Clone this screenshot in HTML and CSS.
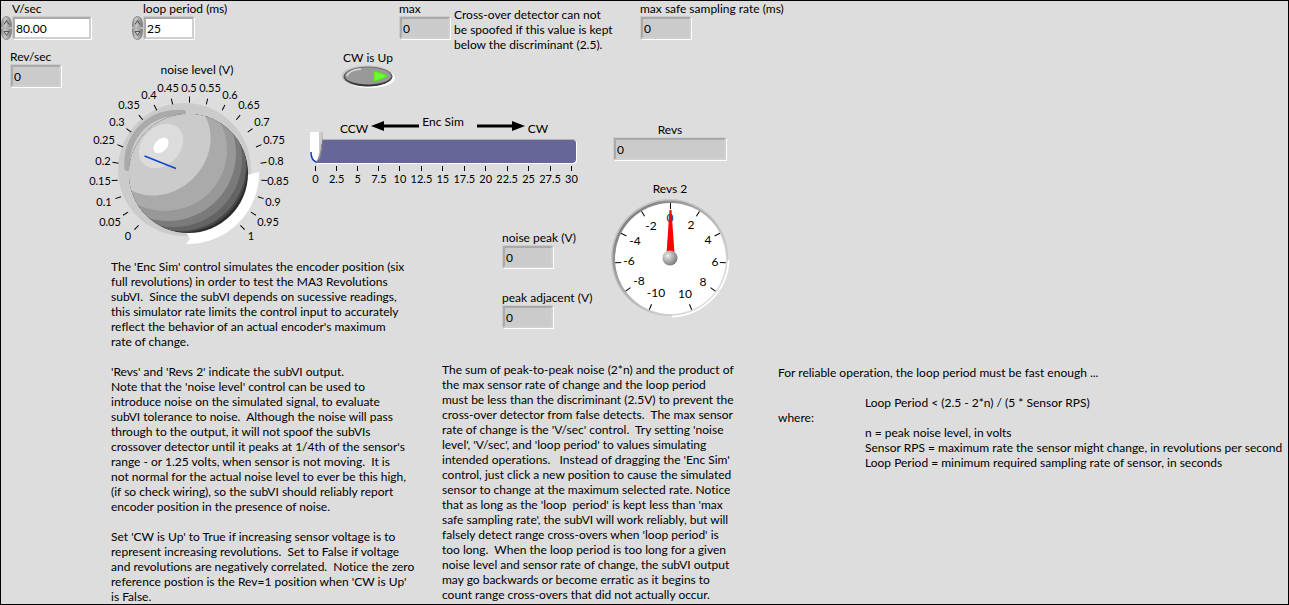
FILE: index.html
```html
<!DOCTYPE html>
<html lang="en">
<head>
<meta charset="utf-8">
<title>Encoder simulator</title>
<link rel="stylesheet" href="styles.css">
</head>
<body>
<main class="panel">
  <header class="topbar">
    <div class="control">
      <label class="caption indent" for="vsec">V/sec</label>
      <div class="numeric">
        <svg class="spinner" viewBox="0 0 11 24" aria-hidden="true"><use href="#spin"/></svg>
        <input class="field wide" id="vsec" type="text" value="80.00">
      </div>
    </div>
    <div class="control">
      <label class="caption indent" for="period">loop period (ms)</label>
      <div class="numeric">
        <svg class="spinner" viewBox="0 0 11 24" aria-hidden="true"><use href="#spin"/></svg>
        <input class="field" id="period" type="text" value="25">
      </div>
    </div>
    <div class="control">
      <label class="caption" for="max">max</label>
      <input class="field readout" id="max" type="text" value="0" readonly>
    </div>
    <p class="note hint">Cross-over detector can not
be spoofed if this value is kept
below the discriminant (2.5).</p>
    <div class="control">
      <label class="caption" for="rate">max safe sampling rate (ms)</label>
      <input class="field readout" id="rate" type="text" value="0" readonly>
    </div>
  </header>

  <section class="noise">
    <div class="control">
      <label class="caption" for="revsec">Rev/sec</label>
      <input class="field readout" id="revsec" type="text" value="0" readonly>
    </div>
    <div class="dial">
      <span class="caption dial-title">noise level (V)</span>
      <svg class="knob" viewBox="88 78 202 168" role="img" aria-label="noise level 0.25 V">
        <defs>
          <clipPath id="ball"><circle cx="188.5" cy="173.5" r="59.5"/></clipPath>
        </defs>
        <circle cx="184.500" cy="169.500" r="66.500" fill="#cbcbcb"/>
        <path d="M259 172A71 71 0 0 1 186 244L190 239L186 232L188 174L247 175Z" fill="#fff"/>
        <path d="M127.500 168A50 50 0 0 1 183 113" fill="none" stroke="#aaa" stroke-width="6" stroke-linecap="round"/>
        <g clip-path="url(#ball)">
          <rect x="120" y="105" width="140" height="140" fill="#2c2c2c"/>
          <circle cx="184" cy="169" r="63" fill="#484848"/>
          <circle cx="180" cy="165" r="66" fill="#646464"/>
          <circle cx="174" cy="159" r="68" fill="#7a7a7a"/>
          <circle cx="168" cy="153" r="68" fill="#989898"/>
          <ellipse cx="165" cy="150" rx="62" ry="61" fill="#aaa"/>
          <ellipse cx="160" cy="145" rx="54" ry="47" transform="rotate(-45 160 145)" fill="#cbcbcb"/>
          <ellipse cx="161" cy="146" rx="25" ry="19" transform="rotate(-45 161 146)" fill="#dcdcdc"/>
          <ellipse cx="161" cy="145.500" rx="9" ry="6" transform="rotate(-45 161 145.500)" fill="#fff"/>
        </g>
        <path d="M144.500 156L176 168.500" stroke="#0a46c8" stroke-width="1.500"/>
        <g stroke="#000">
          <path id="t" d="M189.500 96.500V102.500"/>
          <use href="#t" transform="rotate(-135 189.500 174.500)"/>
          <use href="#t" transform="rotate(-121.500 189.500 174.500)"/>
          <use href="#t" transform="rotate(-108 189.500 174.500)"/>
          <use href="#t" transform="rotate(-94.500 189.500 174.500)"/>
          <use href="#t" transform="rotate(-81 189.500 174.500)"/>
          <use href="#t" transform="rotate(-67.500 189.500 174.500)"/>
          <use href="#t" transform="rotate(-54 189.500 174.500)"/>
          <use href="#t" transform="rotate(-40.500 189.500 174.500)"/>
          <use href="#t" transform="rotate(-27 189.500 174.500)"/>
          <use href="#t" transform="rotate(-13.500 189.500 174.500)"/>
          <use href="#t" transform="rotate(13.500 189.500 174.500)"/>
          <use href="#t" transform="rotate(27 189.500 174.500)"/>
          <use href="#t" transform="rotate(40.500 189.500 174.500)"/>
          <use href="#t" transform="rotate(54 189.500 174.500)"/>
          <use href="#t" transform="rotate(67.500 189.500 174.500)"/>
          <use href="#t" transform="rotate(81 189.500 174.500)"/>
          <use href="#t" transform="rotate(94.500 189.500 174.500)"/>
          <use href="#t" transform="rotate(108 189.500 174.500)"/>
          <use href="#t" transform="rotate(121.500 189.500 174.500)"/>
          <use href="#t" transform="rotate(135 189.500 174.500)"/>
        </g>
        <g class="marks">
          <text x="128" y="240">0</text>
          <text x="110" y="226">0.05</text>
          <text x="104" y="206">0.1</text>
          <text x="100" y="185">0.15</text>
          <text x="103" y="165">0.2</text>
          <text x="104" y="144">0.25</text>
          <text x="117" y="126">0.3</text>
          <text x="129" y="109">0.35</text>
          <text x="149" y="99">0.4</text>
          <text x="168" y="92">0.45</text>
          <text x="189" y="92">0.5</text>
          <text x="210" y="92">0.55</text>
          <text x="230" y="99">0.6</text>
          <text x="249" y="109">0.65</text>
          <text x="262" y="126">0.7</text>
          <text x="274" y="144">0.75</text>
          <text x="276" y="165">0.8</text>
          <text x="278" y="185">0.85</text>
          <text x="273" y="206">0.9</text>
          <text x="268" y="226">0.95</text>
          <text x="251" y="240">1</text>
        </g>
      </svg>
    </div>
  </section>

  <section class="sim">
    <button class="toggle" type="button" aria-pressed="true">
      <span class="caption">CW is Up</span>
      <svg class="toggle-face" viewBox="0 0 54 24" aria-hidden="true">
        <defs>
          <linearGradient id="rim" x1="0" y1="0" x2="0" y2="1"><stop offset="0" stop-color="#777"/><stop offset="1" stop-color="#333"/></linearGradient>
        </defs>
        <ellipse cx="29" cy="13" rx="25" ry="10" fill="#fff"/>
        <ellipse cx="26" cy="11" rx="25.500" ry="10.500" fill="#c8c8c8"/>
        <ellipse cx="27" cy="11.500" rx="24.500" ry="10" fill="url(#rim)"/>
        <ellipse cx="27" cy="11" rx="23" ry="8.500" fill="#999"/>
        <path d="M6 11Q8 5 20 4" fill="none" stroke="#ddd" stroke-width="1.500"/>
        <path d="M33 6Q39 7 46.500 11Q40 15 33 16.500Z" fill="#6f3" stroke="#5d1"/>
      </svg>
    </button>
    <div class="directions">
      <span class="caption">CCW</span>
      <svg class="arrow" viewBox="0 0 48 10" aria-hidden="true"><path d="M0 5L13 0V3.500H48V6.500H13V10Z"/></svg>
      <label class="caption sim-title" for="enc">Enc Sim</label>
      <svg class="arrow" viewBox="0 0 48 10" aria-hidden="true"><path d="M48 5L35 0V3.500H0V6.500H35V10Z"/></svg>
      <span class="caption">CW</span>
    </div>
    <div class="slider">
      <div class="rail"></div>
      <input class="range" id="enc" type="range" min="0" max="30" step="0.5" value="0">
    </div>
    <div class="scale">
      <span>0</span><span>2.5</span><span>5</span><span>7.5</span><span>10</span><span>12.5</span><span>15</span><span>17.5</span><span>20</span><span>22.5</span><span>25</span><span>27.5</span><span>30</span>
    </div>
  </section>

  <section class="peaks">
    <div class="control">
      <label class="caption" for="npeak">noise peak (V)</label>
      <input class="field readout" id="npeak" type="text" value="0" readonly>
    </div>
    <div class="control">
      <label class="caption" for="apeak">peak adjacent (V)</label>
      <input class="field readout" id="apeak" type="text" value="0" readonly>
    </div>
  </section>

  <section class="revs">
    <label class="caption" for="revs">Revs</label>
    <input class="field readout long" id="revs" type="text" value="0" readonly>
    <span class="caption gauge-title">Revs 2</span>
    <svg class="gauge" viewBox="610 198 120 120" role="img" aria-label="Revs 2: 0">
      <defs>
        <linearGradient id="bezel" x1="0" y1="0" x2="1" y2="1"><stop offset=".1" stop-color="#7c7c7c"/><stop offset=".55" stop-color="#bbb"/><stop offset=".85" stop-color="#e2e2e2"/></linearGradient>
        <radialGradient id="hub" cx=".35" cy=".35" r=".7"><stop offset="0" stop-color="#eee"/><stop offset=".4" stop-color="#bbb"/><stop offset="1" stop-color="#777"/></radialGradient>
      </defs>
      <circle cx="669.500" cy="257.500" r="58.500" fill="#c4c4c4"/>
      <path d="M728.500 260A58.500 58.500 0 0 1 672 316.500" fill="none" stroke="#fff" stroke-width="2"/>
      <circle cx="670" cy="258" r="57.500" fill="url(#bezel)"/>
      <circle cx="670.500" cy="258.500" r="55.500" fill="#fff"/>
      <g stroke="#000">
        <path id="g" d="M670.500 203V209"/>
        <use href="#g" transform="rotate(31.500 670.500 258.500)"/>
        <use href="#g" transform="rotate(63 670.500 258.500)"/>
        <use href="#g" transform="rotate(94.500 670.500 258.500)"/>
        <use href="#g" transform="rotate(126 670.500 258.500)"/>
        <use href="#g" transform="rotate(157.500 670.500 258.500)"/>
        <use href="#g" transform="rotate(-31.500 670.500 258.500)"/>
        <use href="#g" transform="rotate(-63 670.500 258.500)"/>
        <use href="#g" transform="rotate(-94.500 670.500 258.500)"/>
        <use href="#g" transform="rotate(-126 670.500 258.500)"/>
        <use href="#g" transform="rotate(-157.500 670.500 258.500)"/>
      </g>
      <g class="marks big">
        <text x="656" y="297">-10</text>
        <text x="639" y="285">-8</text>
        <text x="629" y="265">-6</text>
        <text x="635" y="245">-4</text>
        <text x="651" y="230">-2</text>
        <text x="670" y="222" fill="#036">0</text>
        <text x="691" y="229">2</text>
        <text x="708" y="244">4</text>
        <text x="715" y="266">6</text>
        <text x="703" y="286">8</text>
        <text x="685" y="298">10</text>
      </g>
      <path d="M669.500 210H671.500L674.500 254H666.500Z" fill="#f00"/>
      <circle cx="670" cy="258" r="7.500" fill="url(#hub)"/>
    </svg>
  </section>

  <p class="note about">The 'Enc Sim' control simulates the encoder position (six
full revolutions) in order to test the MA3 Revolutions
subVI.  Since the subVI depends on sucessive readings,
this simulator rate limits the control input to accurately
reflect the behavior of an actual encoder's maximum
rate of change.

'Revs' and 'Revs 2' indicate the subVI output.
Note that the 'noise level' control can be used to
introduce noise on the simulated signal, to evaluate
subVI tolerance to noise.  Although the noise will pass
through to the output, it will not spoof the subVIs
crossover detector until it peaks at 1/4th of the sensor's
range - or 1.25 volts, when sensor is not moving.  It is
not normal for the actual noise level to ever be this high,
(if so check wiring), so the subVI should reliably report
encoder position in the presence of noise.

Set 'CW is Up' to True if increasing sensor voltage is to
represent increasing revolutions.  Set to False if voltage
and revolutions are negatively correlated.  Notice the zero
reference postion is the Rev=1 position when 'CW is Up'
is False.</p>

  <p class="note theory">The sum of peak-to-peak noise (2*n) and the product of
the max sensor rate of change and the loop period
must be less than the discriminant (2.5V) to prevent the
cross-over detector from false detects.  The max sensor
rate of change is the 'V/sec' control.  Try setting 'noise
level', 'V/sec', and 'loop period' to values simulating
intended operations.   Instead of dragging the 'Enc Sim'
control, just click a new position to cause the simulated
sensor to change at the maximum selected rate. Notice
that as long as the 'loop  period' is kept less than 'max
safe sampling rate', the subVI will work reliably, but will
falsely detect range cross-overs when 'loop period' is
too long.  When the loop period is too long for a given
noise level and sensor rate of change, the subVI output
may go backwards or become erratic as it begins to
count range cross-overs that did not actually occur.</p>

  <section class="formula">
    <p class="note">For reliable operation, the loop period must be fast enough ...</p>
    <p class="note inset rule">Loop Period &lt; (2.5 - 2*n) / (5 * Sensor RPS)</p>
    <p class="note">where:</p>
    <p class="note inset">n = peak noise level, in volts
Sensor RPS = maximum rate the sensor might change, in revolutions per second
Loop Period = minimum required sampling rate of sensor, in seconds</p>
  </section>
</main>

<svg class="symbols" aria-hidden="true">
  <defs>
    <linearGradient id="metal"><stop offset="0" stop-color="#888"/><stop offset=".35" stop-color="#ccc"/><stop offset="1" stop-color="#777"/></linearGradient>
    <symbol id="spin" viewBox="0 0 11 24">
      <path d="M.5 11.500V9Q1 .5 5.500 .5T10.500 9V11.500Z" fill="url(#metal)" stroke="#888"/>
      <path d="M.5 12.500V15Q1 23.500 5.500 23.500T10.500 15V12.500Z" fill="url(#metal)" stroke="#888"/>
      <path d="M0 12H11" stroke="#d8d8d8"/>
      <path d="M3 8.500L5.500 4.500L8 8.500" fill="none" stroke="#444"/>
      <path d="M3 15.500H8L5.500 19.500Z" fill="#ccc" stroke="#555"/>
    </symbol>
  </defs>
</svg>
</body>
</html>
```
FILE: styles.css
```css
* { box-sizing: border-box; }

body {
  margin: 0;
  background: #ddd;
  color: #000;
  font: 12px/15px Lato, "Open Sans", sans-serif;
  font-variant-ligatures: none;
}

.panel {
  display: grid;
  grid-template-columns: 300px 134px 166px 170px 1fr;
  grid-template-rows: 48px 180px 30px 103px auto;
  min-height: 100vh;
  border: 1px solid #000;
}

.caption { display: block; white-space: nowrap; }
.note { margin: 0; white-space: pre; }
.symbols { display: block; width: 0; height: 0; position: absolute; }

/* numeric fields */
.control { display: flex; flex-direction: column; align-items: flex-start; }
.indent { padding-left: 11px; }
.numeric { display: flex; align-items: center; }
.spinner { width: 11px; height: 24px; }

.field {
  width: 50px;
  height: 22px;
  margin: 1px;
  padding: 0 1px;
  border: 2px solid;
  border-color: #aaa #d0d0d0 #d0d0d0 #aaa;
  box-shadow: -1px -1px #ccc, 1px 1px #fff;
  background: #fff;
  color: #000;
  font: inherit;
}
.wide { width: 78px; }
.long { width: 112px; }
.readout { background: #cbcbcb; }

/* top row */
.topbar {
  grid-column: 1 / -1;
  display: grid;
  grid-template-columns: 131px 267px 55px 186px auto;
  align-items: start;
}
.hint { padding-top: 6px; }

/* noise knob */
.noise {
  grid-area: 2 / 1 / 4 / 2;
  display: flex;
  align-items: flex-start;
  gap: 26px;
  padding-left: 9px;
}
.dial { padding-top: 13px; }
.dial-title { padding: 0 0 1px 16px; text-align: center; }
.knob { display: block; width: 202px; height: 168px; }
.marks { font-size: 11px; text-anchor: middle; }
.big { font-size: 12px; }

/* encoder simulator */
.sim { grid-area: 2 / 2 / 3 / 4; padding: 1px 0 0 4px; }
.toggle {
  display: flex;
  flex-direction: column;
  align-items: center;
  margin-left: 36px;
  padding: 0;
  border: 0;
  background: none;
  color: inherit;
  font: inherit;
}
.toggle-face { width: 54px; height: 24px; }
.directions {
  display: flex;
  align-items: flex-end;
  gap: 3px;
  margin: 25px 0 0 35px;
}
.arrow { width: 48px; height: 10px; margin-bottom: 5px; }
.sim-title { padding: 0 10px 7px 0; }
.slider {
  display: grid;
  width: 271px;
  margin-top: -4px;
  padding-left: 5px;
}
.rail, .range { grid-area: 1 / 1; }
.rail {
  margin: 7px 0 0 6px;
  border-top: 1px solid #b4b4b4;
  border-radius: 0 4px 4px 0;
  background: #669;
  box-shadow: 1px 1px #fff;
}
.range {
  width: 100%;
  height: 31px;
  margin: 0;
  background: none;
  appearance: none;
}
.range::-webkit-slider-thumb {
  appearance: none;
  width: 13px;
  height: 31px;
  background: url("data:image/svg+xml,%3Csvg xmlns='http://www.w3.org/2000/svg' viewBox='0 0 13 31'%3E%3Cpath d='M1 0H9L13 1L12 16Q11 28 6 30Q3 29 1 22Z' fill='%23999'/%3E%3Cpath d='M8 0H13L11 18Q9 26 6 30Z' fill='%23ccc'/%3E%3Cpath d='M11.500 12Q11 27 6 30' fill='none' stroke='%23888'/%3E%3Cpath d='M0 0H9V20Q8 28 6 29Q0 28 0 18Z' fill='%23fff'/%3E%3Cpath d='M1 20Q1 28 6 30' fill='none' stroke='%230a3cc8' stroke-width='1.500'/%3E%3C/svg%3E") no-repeat;
}
.scale {
  display: grid;
  grid-template-columns: repeat(13, 1fr);
  width: 277px;
  margin-top: 3px;
  font-size: 11px;
}
.scale span {
  display: flex;
  flex-direction: column;
  align-items: center;
}
.scale span::before {
  content: "";
  width: 1px;
  height: 5px;
  background: #000;
}

/* readings */
.peaks {
  grid-area: 3 / 3 / 5 / 4;
  display: flex;
  flex-direction: column;
  gap: 21px;
  padding: 1px 0 0 67px;
}
.revs {
  grid-area: 2 / 4 / 5 / 5;
  display: flex;
  flex-direction: column;
  align-items: center;
  width: 120px;
  margin-left: 9px;
  padding-top: 73px;
}
.gauge-title { margin: 20px 0 2px; }
.gauge { width: 120px; height: 120px; }

/* explanations */
.about { grid-area: 4 / 1 / 6 / 3; padding-left: 110px; }
.theory { grid-area: 5 / 3 / 6 / 5; padding-left: 7px; }
.formula { grid-area: 5 / 5; padding: 3px 0 0 7px; }
.inset { padding-left: 87px; }
.rule { padding-top: 15px; }
```
